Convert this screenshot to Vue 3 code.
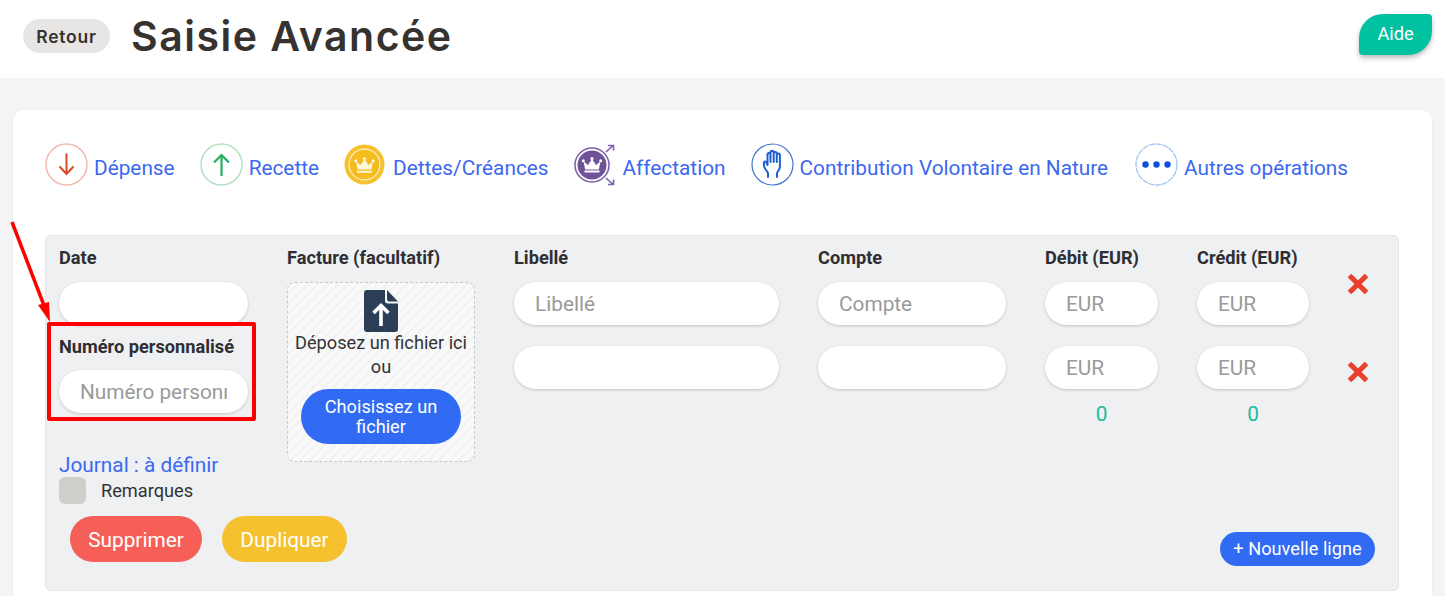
<script setup>
const rows = [
  { lib: 'Libellé', cpt: 'Compte' },
  { lib: '', cpt: '' }
]
</script>

<template>
  <div class="page">
    <header class="top">
      <button class="back">Retour</button>
      <h1>Saisie Avancée</h1>
      <button class="help">Aide</button>
    </header>
    <main class="main">
      <section class="card">
        <nav class="types">
          <a class="type">
            <svg width="43" height="43" viewBox="0 0 43 43"><circle cx="21.5" cy="21.5" r="20.5" fill="#fff" stroke="#f2b8ac" stroke-width="1.5"/><path d="M21.5 10.5v20M14.5 23.5l7 7.5 7-7.5" fill="none" stroke="#d9492b" stroke-width="2"/></svg>
            <span>Dépense</span>
          </a>
          <a class="type">
            <svg width="43" height="43" viewBox="0 0 43 43"><circle cx="21.5" cy="21.5" r="20.5" fill="#fff" stroke="#b3e0c0" stroke-width="1.5"/><path d="M21.5 33V12M14 19.5l7.5-7.5 7.5 7.5" fill="none" stroke="#27ae60" stroke-width="2.2"/></svg>
            <span>Recette</span>
          </a>
          <a class="type">
            <svg width="41" height="43" viewBox="0 0 41 43"><circle cx="20.5" cy="21.5" r="20" fill="#f6c12f"/><circle cx="20.5" cy="21.5" r="16" fill="#fdeec4"/><circle cx="20.5" cy="21.5" r="14.8" fill="#f5bc20"/><g fill="#fff6dc"><path d="M12 18.5l4.5 3.5 4-6 4 6 4.5-3.5-1.7 8h-13.600z"/><rect x="13" y="27.8" width="15" height="2"/><circle cx="11.8" cy="17.8" r="1.6"/><circle cx="20.5" cy="15.5" r="1.6"/><circle cx="29.2" cy="17.8" r="1.6"/></g></svg>
            <span class="wide">Dettes/Créances</span>
          </a>
          <a class="type">
            <svg width="43" height="43" viewBox="0 0 43 43"><circle cx="18" cy="22" r="17" fill="#fff" stroke="#7a5ea8" stroke-width="1.5"/><circle cx="18" cy="22" r="14.5" fill="#6f5298"/><g fill="#fff"><path d="M9.5 18.5l4.500 3.500 4-6 4 6 4.500-3.500-1.700 8h-13.600z"/><rect x="10.5" y="27.5" width="15" height="2"/><circle cx="9.3" cy="17.8" r="1.5"/><circle cx="18" cy="15.5" r="1.5"/><circle cx="26.7" cy="17.8" r="1.5"/></g><path d="M32 9l7-6.500M34 2.500h5.500v5M32 35l7 6.500M34 41.500h5.500v-5" fill="none" stroke="#7e64aa" stroke-width="1.7"/></svg>
            <span>Affectation</span>
          </a>
          <a class="type">
            <svg width="43" height="43" viewBox="0 0 43 43"><circle cx="21.5" cy="21.5" r="20.5" fill="#fff" stroke="#3d78c9" stroke-width="1.2"/><path d="M17 34v-3.500c0-1.800-1.500-2.600-2.500-4-1.300-1.800-1.800-5-1.600-6.800.1-1.500 2-1.500 2.700.1l.9 2.200V11.500c0-2.100 3-2.100 3 0M19.500 11v-1.500c0-2.200 3.200-2.200 3.200 0V11M22.700 10.500c0-2 3.100-2 3.100 0V12M25.800 12c0-2 3.100-2 3.100 0v12c0 3-2.900 4-2.900 6.500V34M19.500 10v9M22.700 10v9M25.800 11v8" fill="none" stroke="#1f5fd0" stroke-width="2" stroke-linecap="round" stroke-linejoin="round"/></svg>
            <span>Contribution Volontaire en Nature</span>
          </a>
          <a class="type last">
            <svg width="43" height="43" viewBox="0 0 43 43"><circle cx="21.5" cy="21.5" r="20.5" fill="#fff" stroke="#a9c6f2" stroke-width="1.4" stroke-dasharray="6 .8"/><circle cx="10.5" cy="21.5" r="3.2" fill="#0b50dd"/><circle cx="21.5" cy="21.5" r="3.2" fill="#0b50dd"/><circle cx="32.5" cy="21.5" r="3.2" fill="#0b50dd"/></svg>
            <span>Autres opérations</span>
          </a>
        </nav>

        <div class="panel">
          <div class="grid">
            <div class="col date">
              <label>Date</label>
              <input class="field" />
              <label class="num-label">Numéro personnalisé</label>
              <input class="field" placeholder="Numéro personnalisé" />
              <a class="journal">Journal : à définir</a>
              <div class="remarks"><span class="box"></span><span>Remarques</span></div>
            </div>

            <div class="col file">
              <label>Facture (facultatif)</label>
              <div class="drop">
                <svg class="file-ico" width="34" height="42" viewBox="0 0 34 42"><path d="M3 0h18v10.500a3 3 0 0 0 3 3h10V39a3 3 0 0 1-3 3H3a3 3 0 0 1-3-3V3a3 3 0 0 1 3-3z" fill="#2c3e55"/><path d="M23 0l11 11.500H25.500a2.500 2.500 0 0 1-2.500-2.500z" fill="#2c3e55"/><path d="M17 36V16M9.500 23l7.500-7.500 7.500 7.500" fill="none" stroke="#fff" stroke-width="3.6"/></svg>
                <p>Déposez un fichier ici<br />ou</p>
                <button class="choose">Choisissez un fichier</button>
              </div>
            </div>

            <div class="col lib">
              <label>Libellé</label>
              <input v-for="(r, i) in rows" :key="i" class="field stacked" :placeholder="r.lib" />
            </div>
            <div class="col cpt">
              <label>Compte</label>
              <input v-for="(r, i) in rows" :key="i" class="field stacked" :placeholder="r.cpt" />
            </div>
            <div class="col deb">
              <label>Débit (EUR)</label>
              <input v-for="i in 2" :key="i" class="field stacked" placeholder="EUR" />
              <div class="total">0</div>
            </div>
            <div class="col cre">
              <label>Crédit (EUR)</label>
              <input v-for="i in 2" :key="i" class="field stacked" placeholder="EUR" />
              <div class="total">0</div>
            </div>
            <div class="col del">
              <svg v-for="i in 2" :key="i" class="x" width="22" height="22" viewBox="0 0 22 22"><path d="M2.5 2.5l17 17M19.5 2.5l-17 17" stroke="#e8402a" stroke-width="5.2"/></svg>
            </div>
          </div>

          <div class="actions">
            <div class="left-actions">
              <button class="act red">Supprimer</button>
              <button class="act yellow">Dupliquer</button>
            </div>
            <button class="newline">+ Nouvelle ligne</button>
          </div>
        </div>
      </section>
    </main>

    <div class="mark"></div>
    <svg class="arrow" width="50" height="112" viewBox="0 0 50 112"><path d="M2 2L35 88" stroke="#f00" stroke-width="3.5" fill="none"/><path d="M40 102L28 85l11-3z" fill="#f00"/></svg>
  </div>
</template>

<style>
html, body { margin: 0; background: #f4f4f4; overflow: hidden; }
</style>

<style scoped>
.page { position: relative; width: 1445px; height: 596px; overflow: hidden; font-family: Roboto, "Liberation Sans", sans-serif; color: #333; }
.top { height: 78px; background: #fff; display: flex; align-items: center; padding: 0 13px 6px 23px; box-sizing: border-box; }
.back { width: 87px; height: 34px; border: 0; border-radius: 17px; background: #e8e6e5; color: #36322f; font: 600 17.5px Inter, sans-serif; letter-spacing: .8px; padding: 0; }
h1 { margin: 0 0 0 21px; font: 600 41px Inter, sans-serif; color: #353230; letter-spacing: 1.5px; }
.help { margin-left: auto; width: 73px; height: 41px; margin-top: -3px; border: 0; border-radius: 24px 4px 24px 4px; background: #00c2a0; color: #fff; font: 400 18.2px Roboto, sans-serif; box-shadow: 0 3px 5px rgba(0,0,0,.25); padding: 0 0 2px; }
.main { padding: 32px 13px 0; }
.card { background: #fff; border-radius: 10px; height: 520px; padding: 33px 32px 0; box-shadow: 0 0 2px rgba(0,0,0,.08); }
.types { display: flex; height: 43px; }
.type { display: flex; align-items: center; gap: 6px; margin-right: 25px; color: #3c68f0; font-size: 20.8px; line-height: 50px; white-space: nowrap; }
.type span { padding-top: 7px; }
.type .wide { margin-left: 2px; }
.last { margin-left: 2px; }
.panel { margin: 49px 1px 0 0; height: 356px; box-sizing: border-box; background: #eef0f2; border: 1px solid #e3e5e7; border-radius: 6px; padding: 11px 14px 0 13px; position: relative; }
.grid { display: grid; grid-template-columns: 189px 188px 265px 188px 113px 112px 60px; column-gap: 39px; }
.col { display: flex; flex-direction: column; align-items: stretch; }
label { display: block; height: 22px; line-height: 22px; font-size: 18.2px; font-weight: 700; color: #2e2e33; margin-bottom: 13px; white-space: nowrap; }
.field { height: 43px; box-sizing: border-box; border: 0; border-radius: 22px; background: #fff; padding: 0 21px; font: 400 20.8px Roboto, sans-serif; color: #333; outline: 0; box-shadow: 0 1px 3px rgba(0,0,0,.18); width: 100%; }
.field::placeholder { color: #9a9a9a; opacity: 1; }
.stacked { margin-bottom: 21px; }
.num-label { margin: 11px 0 12px; }
.journal { margin-top: 40px; color: #3c68f0; font-size: 20.8px; line-height: 24px; }
.remarks { display: flex; align-items: center; gap: 15px; margin-top: 0; font-size: 18.2px; color: #333; }
.box { width: 27px; height: 27px; border-radius: 6px; background: #cfcecb; }
.drop { height: 180px; box-sizing: border-box; border: 1px dashed #c9c9c9; border-radius: 8px; background: repeating-linear-gradient(135deg, #f1f2f3 0 2px, #f9f9f9 2px 7px); display: flex; flex-direction: column; align-items: center; padding-top: 7px; }
.file-ico { flex: none; }
.drop p { margin: -1px 0 0; text-align: center; font-size: 18.2px; line-height: 23.5px; color: #333; white-space: nowrap; }
.choose { margin-top: 11px; width: 160px; height: 55px; border: 0; border-radius: 28px; background: #316bf3; color: #fff; font: 400 18.2px/20px Roboto, sans-serif; padding: 0 20px; }
.total { text-align: center; color: #1abc9c; font-size: 20.8px; line-height: 24px; margin-top: -8px; }
.del { align-items: flex-start; padding-top: 26px; gap: 66px; margin-left: -1px; }
.x { display: block; }
.actions { position: absolute; left: 24px; right: 23px; top: 280px; display: flex; justify-content: space-between; align-items: flex-start; }
.left-actions { display: flex; gap: 20px; }
.act { height: 46px; border: 0; border-radius: 23px; color: #fff; font: 400 20.8px Roboto, sans-serif; padding: 2px 0 0; }
.red { width: 132px; background: #f65f57; }
.yellow { width: 125px; background: #f5c12f; }
.newline { margin-top: 16px; width: 155px; height: 34px; border: 0; border-radius: 17px; background: #316bf3; color: #fff; font: 400 18.2px Roboto, sans-serif; padding: 0 0 2px; }
.mark { position: absolute; left: 47px; top: 322px; width: 209px; height: 99px; box-sizing: border-box; border: 4px solid #f00; border-radius: 2px; }
.arrow { position: absolute; left: 10px; top: 220px; }
</style>
